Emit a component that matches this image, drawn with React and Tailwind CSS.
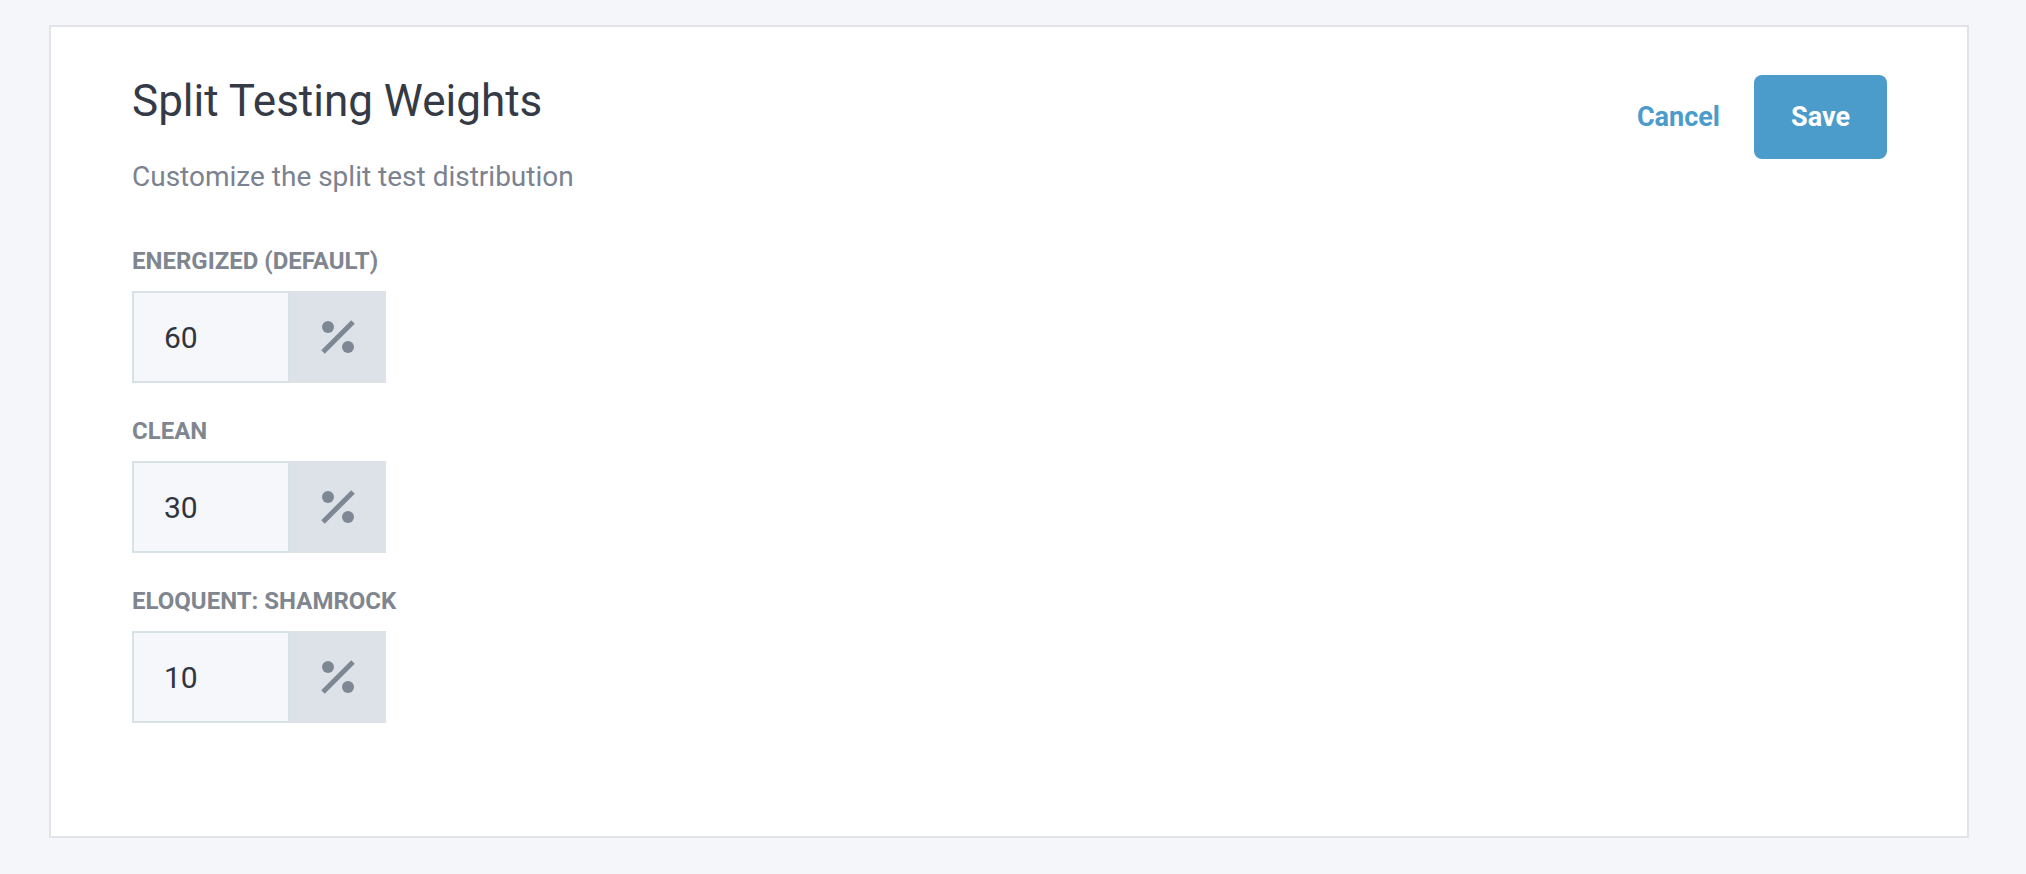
import React from 'react';

const weights = [
  { label: 'Energized (Default)', value: 60 },
  { label: 'Clean', value: 30 },
  { label: 'Eloquent: Shamrock', value: 10 },
];

const PercentIcon = () => (
  <svg width="36" height="36" viewBox="0 0 36 36" fill="none">
    <line x1="3" y1="33" x2="33" y2="3" stroke="#7e8794" strokeWidth="5" strokeLinecap="butt" />
    <circle cx="8" cy="8" r="6" fill="#7e8794" />
    <circle cx="28" cy="28" r="6" fill="#7e8794" />
  </svg>
);

const WeightField = ({ label, value }) => (
  <div>
    <div className="text-[24px] leading-[28px] font-bold uppercase text-[#80868f]">{label}</div>
    <div className="mt-[16px] flex h-[92px]">
      <div className="w-[158px] h-full border-2 border-[#d6e2e5] bg-[#f5f7fa] flex items-center pl-[30px] text-[30px] text-[#2f3541]">
        {value}
      </div>
      <div className="w-[96px] h-full bg-[#dde2e9] flex items-center justify-center">
        <PercentIcon />
      </div>
    </div>
  </div>
);

export default function App() {
  return (
    <div className="min-h-screen bg-[#f5f6fa] pt-[25px] pl-[49px] pb-[37px] font-['Roboto',sans-serif]">
      <div className="w-[1920px] bg-white border-2 border-[#e1e3e9] pt-[48px] pl-[81px] pr-[80px] pb-[113px]">
        <div className="flex justify-between items-start">
          <div>
            <h2 className="text-[44px] leading-[52px] text-[#343a46]">Split Testing Weights</h2>
            <p className="mt-[32px] text-[28px] leading-[36px] text-[#7b8290]">Customize the split test distribution</p>
          </div>
          <div className="flex items-center gap-[34px]">
            <button className="text-[27px] font-bold text-[#4b9bcb]">Cancel</button>
            <button className="h-[84px] w-[133px] rounded-[8px] bg-[#4b9bcb] text-white text-[27px] font-bold">Save</button>
          </div>
        </div>
        <div className="mt-[52px] flex flex-col gap-[34px]">
          {weights.map((w) => (
            <WeightField key={w.label} label={w.label} value={w.value} />
          ))}
        </div>
      </div>
    </div>
  );
}
